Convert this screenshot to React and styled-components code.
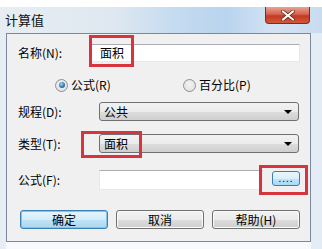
import React from 'react'
import styled, { createGlobalStyle } from 'styled-components'

const GlobalStyle = createGlobalStyle`
  html, body {
    margin: 0;
    padding: 0;
    background: #ffffff;
  }
  body {
    font-family: "Noto Sans CJK SC", "Liberation Sans", sans-serif;
    color: #000000;
  }
`

const Window = styled.div`
  width: 322px;
  height: 249px;
  overflow: hidden;
  display: flex;
  flex-direction: column;
  background: #ffffff;
`

const TopStrip = styled.div`
  height: 7px;
  background: #ffffff;
  position: relative;
`

const TitleBar = styled.div`
  height: 26px;
  display: flex;
  align-items: flex-start;
  background: linear-gradient(90deg, #e7edf3 0%, #dfe8f1 35%, #c4dbf0 55%, #b9d4ee 70%, #d3e3f3 85%, #c8dcf0 100%);
`

const Title = styled.div`
  font-size: 13px;
  line-height: 16px;
  padding: 5px 0 0 5px;
  color: #111111;
`

const CloseButton = styled.div`
  margin-left: auto;
  margin-right: 12px;
  width: 45px;
  height: 17px;
  border: 1px solid #7d2a22;
  border-top: none;
  border-radius: 0 0 4px 4px;
  box-sizing: border-box;
  background: linear-gradient(180deg, #e8a493 0%, #d7624c 45%, #c33a22 55%, #d4563d 100%);
  display: flex;
  align-items: center;
  justify-content: center;
`

const Body = styled.div`
  flex: 1;
  display: flex;
  background: linear-gradient(90deg, #e6edf5 0%, #eef3f8 50%, #e3ecf5 100%);
`

const SideFrame = styled.div`
  width: ${p => p.$w}px;
`

const Column = styled.div`
  display: flex;
  flex-direction: column;
`

const Panel = styled.div`
  width: 305px;
  height: 209px;
  box-sizing: border-box;
  border: 1px solid #7b8899;
  background: #f0f0f0;
  position: relative;
  padding-left: 11px;
  font-size: 12px;
`

const BottomFrame = styled.div`
  height: 7px;
  background: #f7f9fc;
`

const Row = styled.div`
  display: flex;
  align-items: center;
  height: ${p => p.$h || 19}px;
  margin-top: ${p => p.$top}px;
`

const Label = styled.div`
  width: ${p => p.$w || 81}px;
  flex: none;
  font-size: 12px;
  line-height: 14px;
  white-space: nowrap;
`

const TextBox = styled.div`
  width: ${p => p.$w}px;
  height: ${p => p.$h || 18}px;
  box-sizing: border-box;
  background: #ffffff;
  border: 1px solid #e3e9ef;
  border-top-color: #abadb3;
  display: flex;
  align-items: center;
  padding-left: 9px;
  font-size: 12px;
`

const Select = styled.div`
  width: 200px;
  height: 19px;
  box-sizing: border-box;
  border: 1px solid #707070;
  border-radius: 3px;
  background: linear-gradient(180deg, #f2f2f2 0%, #ebebeb 50%, #dddddd 51%, #cfcfcf 100%);
  display: flex;
  align-items: center;
  padding: 0 4px;
  font-size: 12px;
`

const Arrow = styled.div`
  margin-left: auto;
  margin-right: 2px;
  width: 0;
  height: 0;
  border-left: 4px solid transparent;
  border-right: 4px solid transparent;
  border-top: 4px solid #000000;
`

const RadioRow = styled.div`
  display: flex;
  align-items: center;
  height: 16px;
  margin-top: ${p => p.$top}px;
  padding-left: 37px;
`

const RadioItem = styled.label`
  width: ${p => p.$w}px;
  display: flex;
  align-items: center;
  gap: 3px;
  font-size: 12px;
  line-height: 14px;
`

const RadioDot = styled.span`
  width: 13px;
  height: 13px;
  box-sizing: border-box;
  border-radius: 50%;
  border: 1px solid #8e8f8f;
  background: radial-gradient(circle at 50% 40%, #f4f4f4 0%, #dcdcdc 100%);
  display: flex;
  align-items: center;
  justify-content: center;
  &::after {
    content: "";
    display: ${p => (p.$checked ? 'block' : 'none')};
    width: 6px;
    height: 6px;
    border-radius: 50%;
    background: radial-gradient(circle at 40% 35%, #a9d7f5 0%, #2d79b6 55%, #114a7d 100%);
  }
`

const SmallButton = styled.div`
  width: 28px;
  height: 15px;
  margin-left: 9px;
  margin-top: -3px;
  box-sizing: border-box;
  border: 1px solid #3c7fb1;
  border-radius: 3px;
  background: linear-gradient(180deg, #eaf6fd 0%, #d9f0fc 50%, #bee6fd 51%, #a7d9f5 100%);
  font-size: 10px;
  line-height: 11px;
  text-align: center;
  letter-spacing: 1px;
`

const ButtonRow = styled.div`
  display: flex;
  gap: 8px;
  margin-top: 20px;
  padding-left: 2px;
`

const Button = styled.div`
  width: 88px;
  height: 19px;
  box-sizing: border-box;
  border: 1px solid ${p => (p.$default ? '#3c7fb1' : '#707070')};
  border-radius: 3px;
  box-shadow: ${p => (p.$default ? '0 0 0 1px #7fc6e8 inset' : 'inset 0 0 0 1px #fbfbfb')};
  background: ${p =>
    p.$default
      ? 'linear-gradient(180deg, #e5f4fc 0%, #d3edfa 50%, #c0e4f7 51%, #a9d6ef 100%)'
      : 'linear-gradient(180deg, #f2f2f2 0%, #ebebeb 50%, #dddddd 51%, #cfcfcf 100%)'};
  display: flex;
  align-items: center;
  justify-content: center;
  font-size: 12px;
`

const Highlight = styled.div`
  position: absolute;
  left: ${p => p.$x}px;
  top: ${p => p.$y}px;
  width: ${p => p.$w}px;
  height: ${p => p.$h}px;
  box-sizing: border-box;
  border: 3px solid #d8343d;
  pointer-events: none;
`

const CloseGlyph = () => (
  <svg width="14" height="11" viewBox="0 0 14 11">
    <path d="M2 1.5 L12 9.5 M12 1.5 L2 9.5" stroke="#5a1a10" strokeWidth="3.4" strokeLinecap="square" />
    <path d="M2 1.5 L12 9.5 M12 1.5 L2 9.5" stroke="#ffffff" strokeWidth="2" strokeLinecap="square" />
  </svg>
)

export default function App() {
  return (
    <>
      <GlobalStyle />
      <Window>
        <TopStrip />
        <TitleBar>
          <Title>计算值</Title>
          <CloseButton>
            <CloseGlyph />
          </CloseButton>
        </TitleBar>
        <Body>
          <SideFrame $w={6} />
          <Column>
            <Panel>
              <Row $top={9}>
                <Label $w={72}>名称(N):</Label>
                <TextBox $w={210}>面积</TextBox>
              </Row>
              <RadioRow $top={15}>
                <RadioItem $w={128}>
                  <RadioDot $checked />
                  公式(R)
                </RadioItem>
                <RadioItem $w={90}>
                  <RadioDot />
                  百分比(P)
                </RadioItem>
              </RadioRow>
              <Row $top={9}>
                <Label>规程(D):</Label>
                <Select>
                  公共
                  <Arrow />
                </Select>
              </Row>
              <Row $top={13}>
                <Label>类型(T):</Label>
                <Select>
                  面积
                  <Arrow />
                </Select>
              </Row>
              <Row $top={17} $h={20}>
                <Label>公式(F):</Label>
                <TextBox $w={164} $h={20} />
                <SmallButton>....</SmallButton>
              </Row>
              <ButtonRow>
                <Button $default>确定</Button>
                <Button>取消</Button>
                <Button>帮助(H)</Button>
              </ButtonRow>
              <Highlight $x={82} $y={1} $w={45} $h={32} />
              <Highlight $x={74} $y={97} $w={61} $h={27} />
              <Highlight $x={252} $y={131} $w={49} $h={30} />
            </Panel>
            <BottomFrame />
          </Column>
          <SideFrame $w={11} />
        </Body>
      </Window>
    </>
  )
}
